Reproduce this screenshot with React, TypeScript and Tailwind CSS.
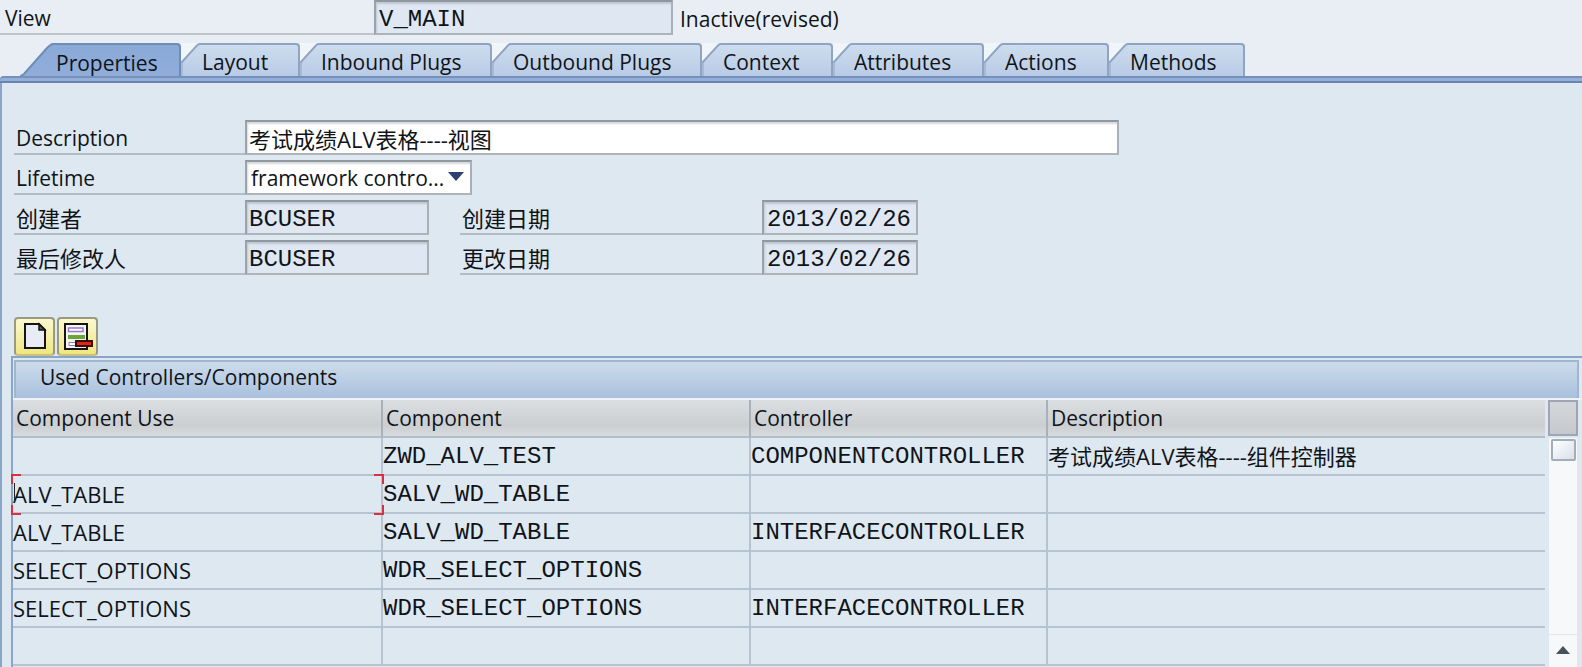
import React from "react";

const tabs = [
  { label: "Layout", width: "w-[119px]" },
  { label: "Inbound Plugs", width: "w-[192px]" },
  { label: "Outbound Plugs", width: "w-[210px]" },
  { label: "Context", width: "w-[131px]" },
  { label: "Attributes", width: "w-[151px]" },
  { label: "Actions", width: "w-[125px]" },
  { label: "Methods", width: "w-[136px]" },
];

const rows = [
  ["", "ZWD_ALV_TEST", "COMPONENTCONTROLLER", "考试成绩ALV表格----组件控制器"],
  ["ALV_TABLE", "SALV_WD_TABLE", "", ""],
  ["ALV_TABLE", "SALV_WD_TABLE", "INTERFACECONTROLLER", ""],
  ["SELECT_OPTIONS", "WDR_SELECT_OPTIONS", "", ""],
  ["SELECT_OPTIONS", "WDR_SELECT_OPTIONS", "INTERFACECONTROLLER", ""],
  ["", "", "", ""],
];

const mono = "font-['Liberation_Mono','Noto_Sans_CJK_SC',monospace] text-[24px]";
const field =
  "h-[35px] rounded-none border-2 border-t-[#8f979f] border-l-[#9aa2aa] border-r-[#a9b0b7] border-b-[#adb4ba] shadow-[inset_1px_2px_2px_rgba(90,100,120,0.25)] outline-none";
const labelBox =
  "flex h-[35px] shrink-0 items-center border-b-2 border-[#b3bcc4] pl-[2px] pt-[2px]";

function ActiveTab() {
  return (
    <button type="button" role="tab" aria-selected="true" className="ml-5 flex h-[34px] w-[161px]">
      <svg width="33" height="34" viewBox="0 0 33 34" className="shrink-0">
        <defs>
          <linearGradient id="activeTab" x1="0" y1="0" x2="0" y2="1">
            <stop offset="0" stopColor="#8aa9d6" />
            <stop offset="1" stopColor="#91aedb" />
          </linearGradient>
        </defs>
        <path d="M0 34 L4 31 L27 5 Q31 0 33 0 V34 Z" fill="url(#activeTab)" />
        <path d="M0 33.5 L4 31 L27 5 Q31 1 33 1" fill="none" stroke="#6f8cb8" strokeWidth="2" />
      </svg>
      <span className="flex h-full grow items-center rounded-tr-[4px] border-t-2 border-r-2 border-[#6f8cb8] bg-linear-to-b from-[#8aa9d6] to-[#91aedb] pl-[3px] pt-[3px]">
        Properties
      </span>
    </button>
  );
}

function Tab({ label, width }: { label: string; width: string }) {
  return (
    <button type="button" role="tab" aria-selected="false" className={"flex h-[33px] shrink-0 " + width}>
      <svg width="19" height="33" viewBox="0 0 19 33" className="shrink-0">
        <defs>
          <linearGradient id="idleTab" x1="0" y1="0" x2="0" y2="1">
            <stop offset="0" stopColor="#cddcee" />
            <stop offset="1" stopColor="#b9cce6" />
          </linearGradient>
        </defs>
        <path d="M0 0 H19 L0 20 Z" fill="#f0f5fa" />
        <path d="M0 20 L16 2 Q17 0 19 0 V33 H0 Z" fill="url(#idleTab)" />
        <path d="M0 20 L16 2.500 Q17 1 19 1" fill="none" stroke="#8ea4c1" strokeWidth="2" />
        <path d="M1 20 V33" stroke="#a8bad3" strokeWidth="2" />
      </svg>
      <span className="flex h-full grow items-center whitespace-nowrap rounded-tr-[4px] border-t-2 border-r-2 border-[#8ea4c1] bg-linear-to-b from-[#cddcee] to-[#b9cce6] pl-[2px] pt-[3px]">
        {label}
      </span>
    </button>
  );
}

function IconButton({ label, children }: { label: string; children: React.ReactNode }) {
  return (
    <button
      type="button"
      aria-label={label}
      className="flex h-[39px] w-[41px] items-center justify-center rounded-[4px] border-2 border-[#9a9a80] border-b-[#c9c27a] bg-linear-to-b from-[#fbf8cf] to-[#f0e680] pb-[2px]"
    >
      {children}
    </button>
  );
}

function Corners() {
  return (
    <>
      <span className="absolute -top-[2px] -left-[2px] h-[10px] w-[10px] border-t-2 border-l-2 border-[#d8303f]" />
      <span className="absolute -top-[2px] -right-[3px] z-10 h-[10px] w-[10px] border-t-2 border-r-2 border-[#d8303f]" />
      <span className="absolute -bottom-[3px] -left-[2px] h-[10px] w-[10px] border-b-2 border-l-2 border-[#d8303f]" />
      <span className="absolute -right-[3px] -bottom-[3px] z-10 h-[10px] w-[10px] border-r-2 border-b-2 border-[#d8303f]" />
      <span className="absolute top-[7px] left-px h-[20px] w-px bg-[#222]" />
    </>
  );
}

export default function App() {
  return (
    <div className="flex min-h-screen flex-col overflow-hidden bg-[#e9eef4] font-['Open_Sans','Noto_Sans_CJK_SC',sans-serif] text-[21px] leading-7 text-[#101418]">
      <header className="flex h-[43px] items-start">
        <label htmlFor="view" className="flex h-[35px] w-[374px] items-center border-b-2 border-[#c0c4c8] pl-[5px] pt-[3px]">
          View
        </label>
        <input id="view" readOnly defaultValue="V_MAIN" className={field + " w-[299px] bg-[#dfe8f2] px-[3px] pt-[3px] " + mono} />
        <span className="pt-[5px] pl-[7px]">Inactive(revised)</span>
      </header>

      <div role="tablist" className="flex h-[33px] items-start">
        <ActiveTab />
        {tabs.map((t) => (
          <Tab key={t.label} label={t.label} width={t.width} />
        ))}
      </div>

      <main className="flex grow flex-col rounded-tl-[4px] border-l-2 border-[#8aa6c6] bg-[#dee8f1]">
        <div className="-ml-[2px] h-[7px] shrink-0 rounded-tl-[4px] border-y-2 border-t-[#7790b8] border-b-[#6984b2] bg-[#93afdb]" />

        <form className="flex flex-col gap-[5px] pt-[37px] pl-3">
          <div className="flex">
            <label htmlFor="description" className={labelBox + " w-[231px]"}>Description</label>
            <input id="description" defaultValue="考试成绩ALV表格----视图" className={field + " w-[874px] bg-white px-[2px] text-[22px]"} />
          </div>
          <div className="flex">
            <label htmlFor="lifetime" className={labelBox + " w-[231px]"}>Lifetime</label>
            <div className="relative">
              <select id="lifetime" className={field + " w-[227px] appearance-none bg-white pl-[4px]"}>
                <option>framework contro...</option>
              </select>
              <svg width="16" height="9" viewBox="0 0 16 9" className="pointer-events-none absolute top-[12px] right-[8px]">
                <path d="M0 0 H16 L8 9 Z" fill="#2c3f6e" />
              </svg>
            </div>
          </div>
          <div className="flex">
            <label htmlFor="creator" className={labelBox + " w-[231px] text-[22px]"}>创建者</label>
            <input id="creator" readOnly defaultValue="BCUSER" className={field + " w-[184px] bg-[#dfe8f2] px-[2px] pt-[3px] " + mono} />
            <label htmlFor="created" className={labelBox + " ml-[31px] w-[302px] text-[22px]"}>创建日期</label>
            <input id="created" readOnly defaultValue="2013/02/26" className={field + " w-[156px] bg-[#dfe8f2] px-[3px] pt-[3px] " + mono} />
          </div>
          <div className="flex">
            <label htmlFor="changer" className={labelBox + " w-[231px] text-[22px]"}>最后修改人</label>
            <input id="changer" readOnly defaultValue="BCUSER" className={field + " w-[184px] bg-[#dfe8f2] px-[2px] pt-[3px] " + mono} />
            <label htmlFor="changed" className={labelBox + " ml-[31px] w-[302px] text-[22px]"}>更改日期</label>
            <input id="changed" readOnly defaultValue="2013/02/26" className={field + " w-[156px] bg-[#dfe8f2] px-[3px] pt-[3px] " + mono} />
          </div>
        </form>

        <div className="mt-[42px] flex gap-[2px] pl-3">
          <IconButton label="Create">
            <svg width="24" height="28" viewBox="0 0 24 28">
              <path d="M2 2 H16 L22 8 V26 H2 Z" fill="#e8edf5" stroke="#151515" strokeWidth="2" />
              <path d="M16 2 V8 H22 Z" fill="#555" stroke="#151515" strokeWidth="1.500" />
            </svg>
          </IconButton>
          <IconButton label="Delete row">
            <svg width="30" height="28" viewBox="0 0 30 28">
              <path d="M2 2 H24 V27 H2 Z" fill="#f4f5f2" stroke="#151515" strokeWidth="2" />
              <path d="M5.500 6 H20 V9.500 H5.500 Z" fill="#fff" stroke="#9878c8" strokeWidth="1.500" />
              <path d="M5 13 H22 V17 H5 Z" fill="#6ba539" />
              <path d="M6 20.500 H13 V23.500 H6 Z" fill="#fff" stroke="#8a80b0" />
              <path d="M13 19 H29 V24 H13 Z" fill="#e02418" stroke="#3a0c0c" strokeWidth="2" />
            </svg>
          </IconButton>
        </div>

        <section className="ml-[9px] flex grow flex-col border-t-2 border-l-2 border-[#8aa5c8] pt-[2px]">
          <h2 className="mx-px mr-[3px] flex h-[38px] shrink-0 items-center border-t-2 border-r-2 border-l-2 border-[#a0b5ce] bg-linear-to-b from-[#cddceb] to-[#a9c0dd] pb-[6px] pl-[24px]">
            Used Controllers/Components
          </h2>
          <div className="flex grow border-t-2 border-[#eef3f8]">
            <table className="w-full table-fixed border-separate border-spacing-0 self-start">
              <colgroup>
                <col className="w-[370px]" />
                <col className="w-[368px]" />
                <col className="w-[297px]" />
                <col />
              </colgroup>
              <thead>
                <tr className="h-[38px]">
                  {["Component Use", "Component", "Controller", "Description"].map((h, i) => (
                    <th
                      key={h}
                      className={
                        "border-b-2 border-[#b4bec9] bg-linear-to-b from-[#dcdfe2] via-[#cbcfd2] via-70% to-[#d8dbde] p-0 pl-[3px] text-left font-normal" +
                        (i < 3 ? " border-r-2 border-r-[#a9b0b8]" : "")
                      }
                    >
                      {h}
                    </th>
                  ))}
                </tr>
              </thead>
              <tbody>
                {rows.map((r, ri) => (
                  <tr key={ri} className="h-[38px]">
                    {r.map((c, ci) => (
                      <td
                        key={ci}
                        className={
                          "relative border-b-2 border-[#b6c4d1] p-0 whitespace-nowrap" +
                          (ci < 3 ? " border-r-2" : "") +
                          (ci === 1 || ci === 2 ? " pt-[2px] " + mono : " text-[22px]")
                        }
                      >
                        {c}
                        {ri === 1 && ci === 0 && <Corners />}
                      </td>
                    ))}
                  </tr>
                ))}
              </tbody>
            </table>
            <div className="ml-[3px] flex w-[34px] shrink-0 flex-col pr-[4px]">
              <button type="button" aria-label="Column settings" className="h-[36px] w-[30px] shrink-0 border-2 border-[#9ea5b3] bg-linear-to-b from-[#d4d7da] to-[#c5c9ce]" />
              <div className="mt-[2px] ml-px flex w-[28px] grow flex-col items-center bg-[#f7f8fa]">
                <button type="button" aria-label="Scroll position" className="mt-px h-[22px] w-[25px] rounded-[2px] border-2 border-[#a3adb8] bg-linear-to-br from-white to-[#d8e0ea]" />
                <button type="button" aria-label="Scroll up" className="mt-auto flex h-[33px] w-full items-center justify-center border-t border-[#e2e6ea] pb-[2px]">
                  <svg width="14" height="8" viewBox="0 0 14 8">
                    <path d="M0 8 L7 0 L14 8 Z" fill="#46535f" />
                  </svg>
                </button>
              </div>
            </div>
          </div>
        </section>
      </main>
    </div>
  );
}
